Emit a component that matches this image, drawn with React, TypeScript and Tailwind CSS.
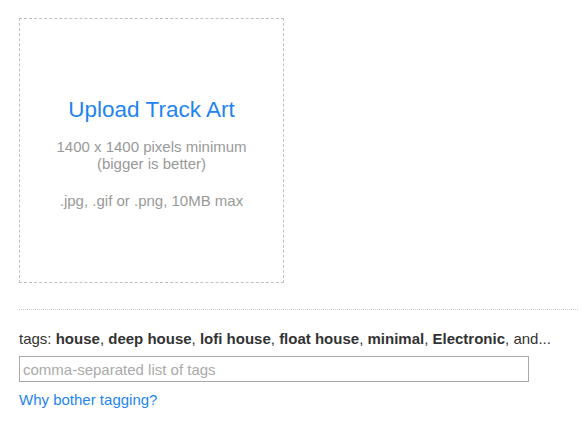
export default function App() {
  const tags = ["house", "deep house", "lofi house", "float house", "minimal", "Electronic"];
  return (
    <div className="w-[586px] h-[430px] bg-white pt-[18px] pl-[19px] pr-[8px]" style={{ fontFamily: '"Liberation Sans", Arial, sans-serif' }}>
      <div className="w-[265px] h-[265px] pt-[4px] border border-dashed border-[#c0c0c0] flex flex-col items-center justify-center text-center">
        <div className="text-[22.5px] leading-[26px] text-[#1f84f0]">Upload Track Art</div>
        <div className="mt-[15px] text-[15px] leading-[17px] text-[#999]">
          1400 x 1400 pixels minimum
          <br />
          (bigger is better)
        </div>
        <div className="mt-[20px] text-[15px] leading-[17px] text-[#999]">.jpg, .gif or .png, 10MB max</div>
      </div>
      <div className="mt-[26px] border-t border-dotted border-[#c8c8c8]" />
      <div className="mt-[20px] text-[15px] leading-[18px] text-[#333]">
        tags:{" "}
        {tags.map((t, i) => (
          <span key={t}>
            <b className="font-bold">{t}</b>
            {i < tags.length - 1 ? ", " : ""}
          </span>
        ))}
        , and...
      </div>
      <input
        className="mt-[8px] block w-[510px] h-[26px] border border-[#a9a9a9] px-[3px] text-[15px] text-[#333] placeholder:text-[#aaa] outline-none"
        placeholder="comma-separated list of tags"
        style={{ fontFamily: '"Liberation Sans", Arial, sans-serif' }}
      />
      <a className="mt-[9px] block text-[15px] leading-[18px] text-[#1f84f0]" href="#">
        Why bother tagging?
      </a>
    </div>
  );
}
